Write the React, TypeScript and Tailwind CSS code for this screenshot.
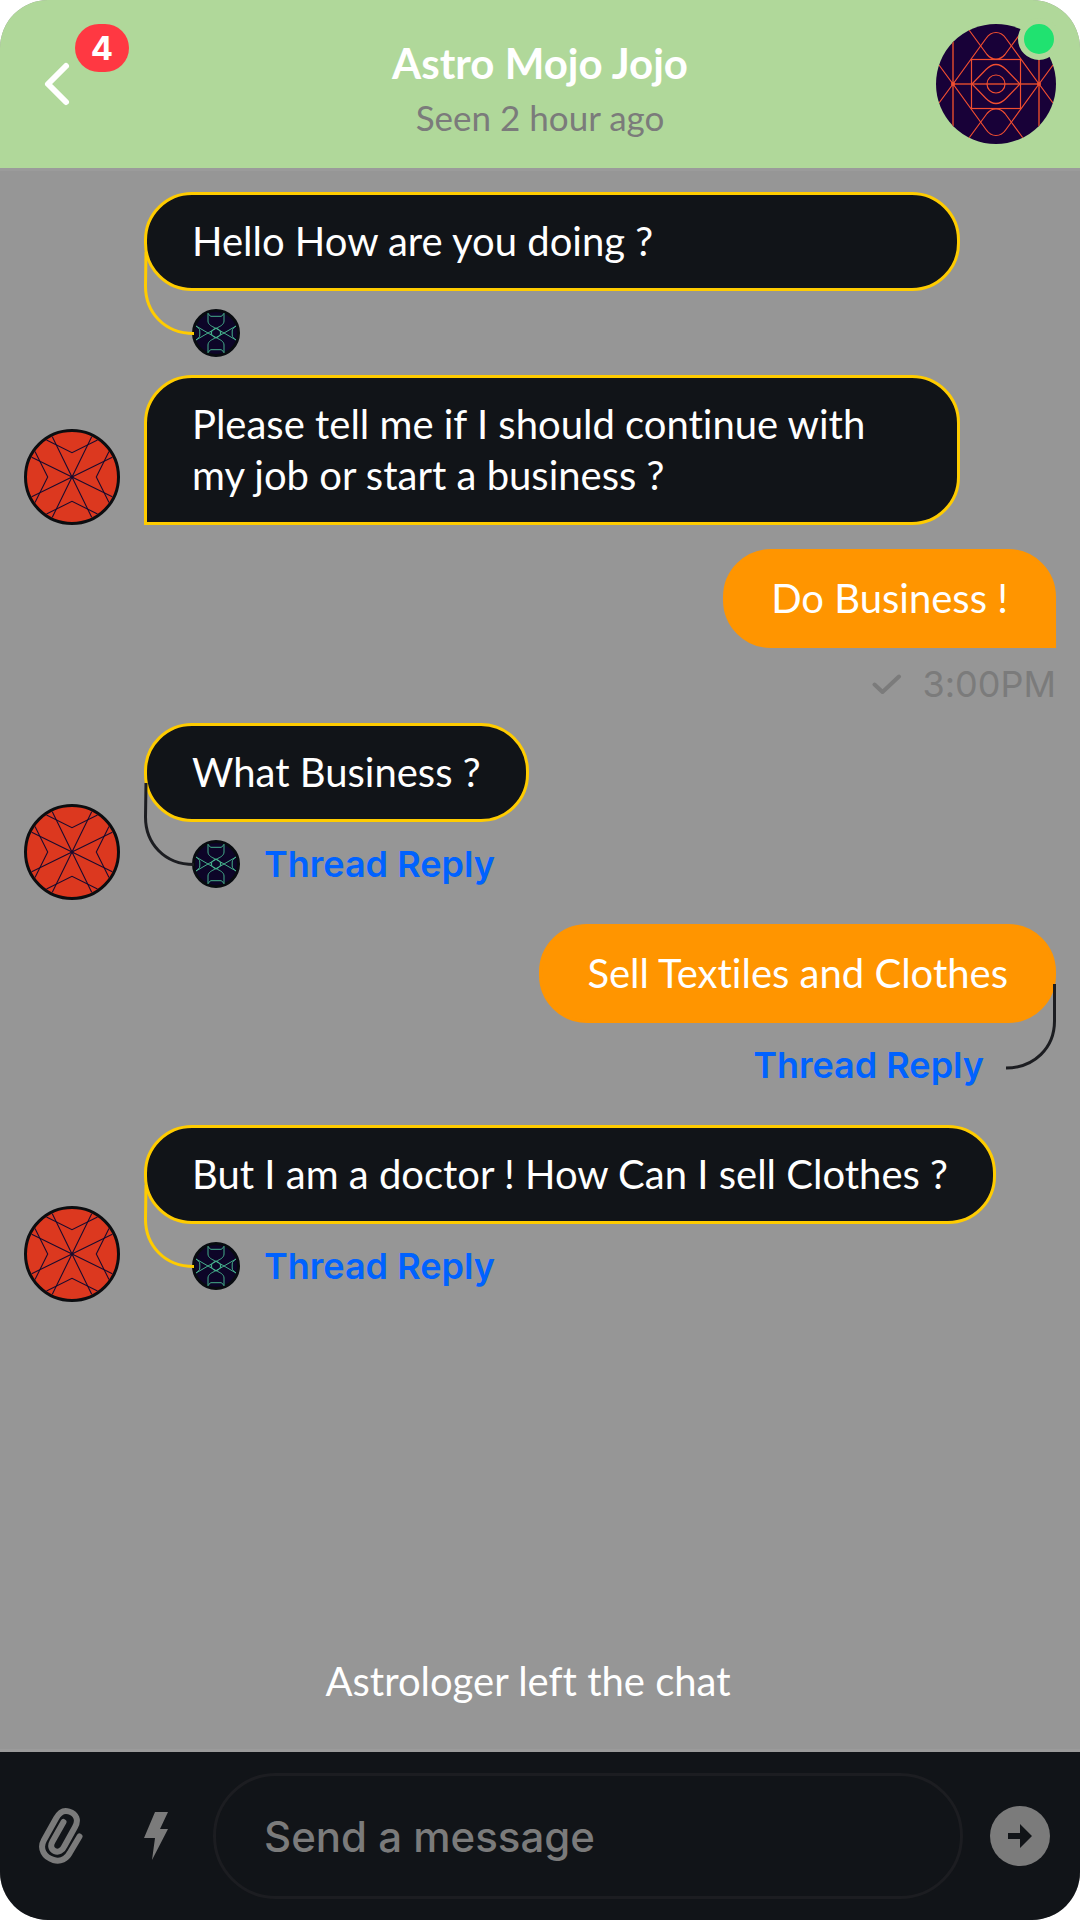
import type { ReactNode } from "react";

function StarAvatar() {
  return (
    <svg viewBox="0 0 96 96" className="size-24 shrink-0" role="img" aria-label="User avatar">
      <circle cx="48" cy="48" r="46.5" fill="#dc381f" stroke="#0b0d10" strokeWidth="3" />
      <g stroke="#1a0b2e" strokeWidth="1.1" fill="none">
        <path d="M7.7 28.3 88.3 67.7M7.7 67.7 88.3 28.3M28.3 7.7 67.7 88.3M67.7 7.7 28.3 88.3" />
        <path d="M22.5 11 48 23.7 73.5 11M22.5 85 48 72.3 73.5 85M11 22.5 23.7 48 11 73.5M85 22.5 72.3 48 85 73.5" />
      </g>
      <circle cx="48" cy="48" r="1.5" fill="#1a0b2e" />
    </svg>
  );
}

function ReplyAvatar() {
  return (
    <svg viewBox="0 0 48 48" className="size-12 shrink-0" role="img" aria-label="Replier avatar">
      <circle cx="24" cy="24" r="22.5" fill="#0d0528" stroke="#080b10" strokeWidth="3" />
      <g stroke="#45b08c" strokeWidth="1" fill="none">
        <circle cx="24" cy="24" r="4.5" />
        <path d="M29 24C28.500 21.500 26.500 20.500 24 19.300C19.500 17.300 16 15.500 16 12V4.300C17 5.300 17.700 7.300 19 7.300H29C30.300 7.300 31 5.300 32 4.300V12C32 15.500 28.500 17.300 24 19.300C21.500 20.500 19.500 21.500 19 24" />
        <path d="M29 24C28.500 26.500 26.500 27.500 24 28.700C19.500 30.700 16 32.500 16 36V43.700C17 42.700 17.700 40.700 19 40.700H29C30.300 40.700 31 42.700 32 43.700V36C32 32.500 28.500 30.700 24 28.700C21.500 27.500 19.500 26.500 19 24" />
        <path d="M24 19.300 4 31C6 29 7.800 28.500 7.800 26V22C7.800 19.500 6 19 4 17L24 28.700" />
        <path d="M24 19.300 44 31C42 29 40.200 28.500 40.200 26V22C40.200 19.500 42 19 44 17L24 28.700" />
      </g>
    </svg>
  );
}

function AstroAvatar() {
  return (
    <div className="relative size-30 shrink-0">
      <svg viewBox="0 0 120 120" className="size-full" role="img" aria-label="Astro Mojo Jojo">
        <defs>
          <clipPath id="astro-clip">
            <circle cx="60" cy="60" r="60" />
          </clipPath>
        </defs>
        <g clipPath="url(#astro-clip)" fill="none" stroke="#f04e30" strokeWidth="1.2">
          <rect width="120" height="120" fill="#180138" stroke="none" />
          <path d="M17 0V120M103 0V120M17 60H103" stroke="#a8352f" strokeWidth="2" />
          <path d="M3 41 17 60 50 14.500Q54 8.500 60 8.500T70 14.500L103 60 117 41" />
          <path d="M3 79 17 60 50 105.500Q54 111.500 60 111.500T70 105.500L103 60 117 79" />
          <path d="M33 6 51 30.500Q55 35.200 60 35.200T69 30.500L87 6" />
          <path d="M33 114 51 89.500Q55 84.800 60 84.800T69 89.500L87 114" />
          <rect x="35.500" y="35.500" width="49" height="49" />
          <path d="M36 60 50 45.500Q60 35.500 70 45.500L84 60 70 74.500Q60 84.500 50 74.500Z" />
          <circle cx="60" cy="60" r="9" />
        </g>
        <circle cx="17" cy="60" r="2" fill="#f04e30" />
        <circle cx="103" cy="60" r="2" fill="#f04e30" />
      </svg>
      <span className="absolute -top-1.5 -right-1 size-10.5 rounded-full border-6 border-[#b0d89a] bg-[#20e270]" />
    </div>
  );
}

function Connector({ side, color }: { side: "left" | "right"; color: string }) {
  return side === "left" ? (
    <svg viewBox="0 0 50 86" fill="none" className="absolute top-15 left-0 h-[86px] w-[50px]" aria-hidden="true">
      <path d="M2 0 1.500 34C1.500 60 20 81.500 50 81.500" stroke={color} strokeWidth="3" />
    </svg>
  ) : (
    <svg viewBox="0 0 50 86" fill="none" className="absolute top-15 right-0 h-[86px] w-[50px]" aria-hidden="true">
      <path d="M48.500 0V37C48.500 64 28 84 0 84" stroke={color} strokeWidth="3" />
    </svg>
  );
}

const bubble = "w-fit border-3 px-[45px] py-[21px] text-[40px] leading-[51px] text-white";

function Incoming({
  children,
  className = "",
  avatar = true,
  thread,
}: {
  children: ReactNode;
  className?: string;
  avatar?: boolean;
  thread?: ReactNode;
}) {
  return (
    <div className="flex items-end gap-6">
      {avatar ? <StarAvatar /> : <span className="w-24 shrink-0" />}
      <div className={`relative min-w-0 ${className}`}>
        {children}
        {thread}
      </div>
    </div>
  );
}

function ThreadLink() {
  return (
    <a href="#thread" className="font-[Inter,sans-serif] text-4xl leading-12 font-semibold text-[#0062ff]">
      Thread Reply
    </a>
  );
}

export default function App() {
  return (
    <div className="flex min-h-screen flex-col overflow-hidden rounded-[48px] bg-[#969696] font-[Lato,sans-serif] [font-variant-ligatures:none]">
      <header className="grid grid-cols-[1fr_auto_1fr] items-center bg-[#b0d89a] px-6 py-6">
        <button type="button" aria-label="Back, 4 unread" className="relative ml-[18px] flex h-15 w-fit items-center">
          <svg viewBox="0 0 30 48" fill="none" className="h-12 w-[30px]">
            <path d="M24 6 6 24 24 42" stroke="#fff" strokeWidth="6" strokeLinecap="round" strokeLinejoin="round" />
          </svg>
          <span className="absolute -top-[30px] left-[33px] flex h-12 w-[54px] items-center justify-center rounded-full bg-[#ff3842] font-[Inter,sans-serif] text-[33px] leading-none font-bold text-white">
            4
          </span>
        </button>
        <div className="pt-3 text-center">
          <h1 className="text-[42px] leading-[54px] font-bold text-white">Astro Mojo Jojo</h1>
          <p className="text-[35px] leading-[54px] text-[#7b7b7b]">Seen 2 hour ago</p>
        </div>
        <div className="flex justify-end">
          <AstroAvatar />
        </div>
      </header>

      <main className="flex grow flex-col border-y-3 border-[#9b9b9b] px-6 pt-[21px]">
        <Incoming
          avatar={false}
          className="w-full max-w-[816px]"
          thread={
            <div className="mt-[18px] pl-12">
              <ReplyAvatar />
              <Connector side="left" color="#ffcc00" />
            </div>
          }
        >
          <p className={`${bubble} w-full rounded-[48px] border-[#ffcc00] bg-[#111418]`}>Hello How are you doing ?</p>
        </Incoming>

        <div className="mt-[18px]">
          <Incoming className="w-full max-w-[816px]">
            <p className={`${bubble} w-full rounded-[48px] rounded-bl-none border-[#ffcc00] bg-[#111418]`}>
              Please tell me if I should continue with my job or start a business ?
            </p>
          </Incoming>
        </div>

        <div className="mt-6 flex flex-col items-end">
          <p className={`${bubble} rounded-[48px] rounded-br-none border-[#ff9500] bg-[#ff9500]`}>Do Business !</p>
          <div className="mt-[18px] flex items-center gap-5 font-[Inter,sans-serif] text-4xl leading-9 text-[#7b7b7b]">
            <svg viewBox="0 0 30 21" fill="none" className="h-[21px] w-[30px]" aria-label="Sent">
              <path d="M2.500 10.500 10.500 18 27 2.500" stroke="#7b7b7b" strokeWidth="4" strokeLinecap="round" strokeLinejoin="round" />
            </svg>
            <time>3:00PM</time>
          </div>
        </div>

        <div className="mt-[21px]">
          <Incoming
            thread={
              <div className="mt-[18px] flex gap-6 pb-3 pl-12">
                <ReplyAvatar />
                <Connector side="left" color="#1c1d21" />
                <ThreadLink />
              </div>
            }
          >
            <p className={`${bubble} rounded-[48px] border-[#ffcc00] bg-[#111418]`}>What Business ?</p>
          </Incoming>
        </div>

        <div className="relative mt-6 flex flex-col items-end">
          <p className={`${bubble} rounded-[48px] border-[#ff9500] bg-[#ff9500]`}>Sell Textiles and Clothes</p>
          <div className="mt-[18px] pr-18 pb-3">
            <ThreadLink />
          </div>
          <Connector side="right" color="#1c1d21" />
        </div>

        <div className="mt-6">
          <Incoming
            thread={
              <div className="mt-[18px] flex gap-6 pb-3 pl-12">
                <ReplyAvatar />
                <Connector side="left" color="#ffcc00" />
                <ThreadLink />
              </div>
            }
          >
            <p className={`${bubble} rounded-[48px] border-[#ffcc00] bg-[#111418]`}>
              But I am a doctor ! How Can I sell Clothes ?
            </p>
          </Incoming>
        </div>

        <p className="mt-auto pt-12 pr-6 pb-[42px] text-center text-[40px] leading-[51px] text-white">
          Astrologer left the chat
        </p>
      </main>

      <footer className="flex items-center bg-[#111418] py-[21px] pr-[30px] pl-9">
        <button type="button" aria-label="Attach file" className="w-12">
          <svg viewBox="0 0 48 60" fill="none" className="h-15 w-12">
            <path
              d="M43.500 30.500 34 46.500C30.500 53 24.500 56 17.500 54C8.500 51.500 3 43 8 34L20 12.500C23 7 27 3.500 33 5.500C40.500 8 43 14 39 21L28.500 40C26.500 44.500 22.500 47 18.500 45C14.500 43 14.500 39 16.500 35.500L27.500 16"
              stroke="#7b7b7b"
              strokeWidth="6"
              strokeLinecap="round"
              strokeLinejoin="round"
            />
          </svg>
        </button>
        <button type="button" aria-label="Quick replies" className="ml-15">
          <svg viewBox="0 0 24 48" className="h-12 w-6">
            <path d="M11 0H24L16 17H24L8 48 11 26H0Z" fill="#7b7b7b" />
          </svg>
        </button>
        <input
          type="text"
          aria-label="Message"
          placeholder="Send a message"
          className="ml-[45px] h-[126px] min-w-0 grow rounded-full border-3 border-[#1c1d21] bg-transparent px-12 font-[Inter,sans-serif] text-[42px] font-medium text-white outline-none placeholder:text-[#7b7b7b]"
        />
        <button type="button" aria-label="Send" className="ml-[27px]">
          <svg viewBox="0 0 60 60" className="size-15">
            <circle cx="30" cy="30" r="30" fill="#7b7b7b" />
            <path d="M18 27H30V18L42 30 30 42V33H18Z" fill="#111418" />
          </svg>
        </button>
      </footer>
    </div>
  );
}
